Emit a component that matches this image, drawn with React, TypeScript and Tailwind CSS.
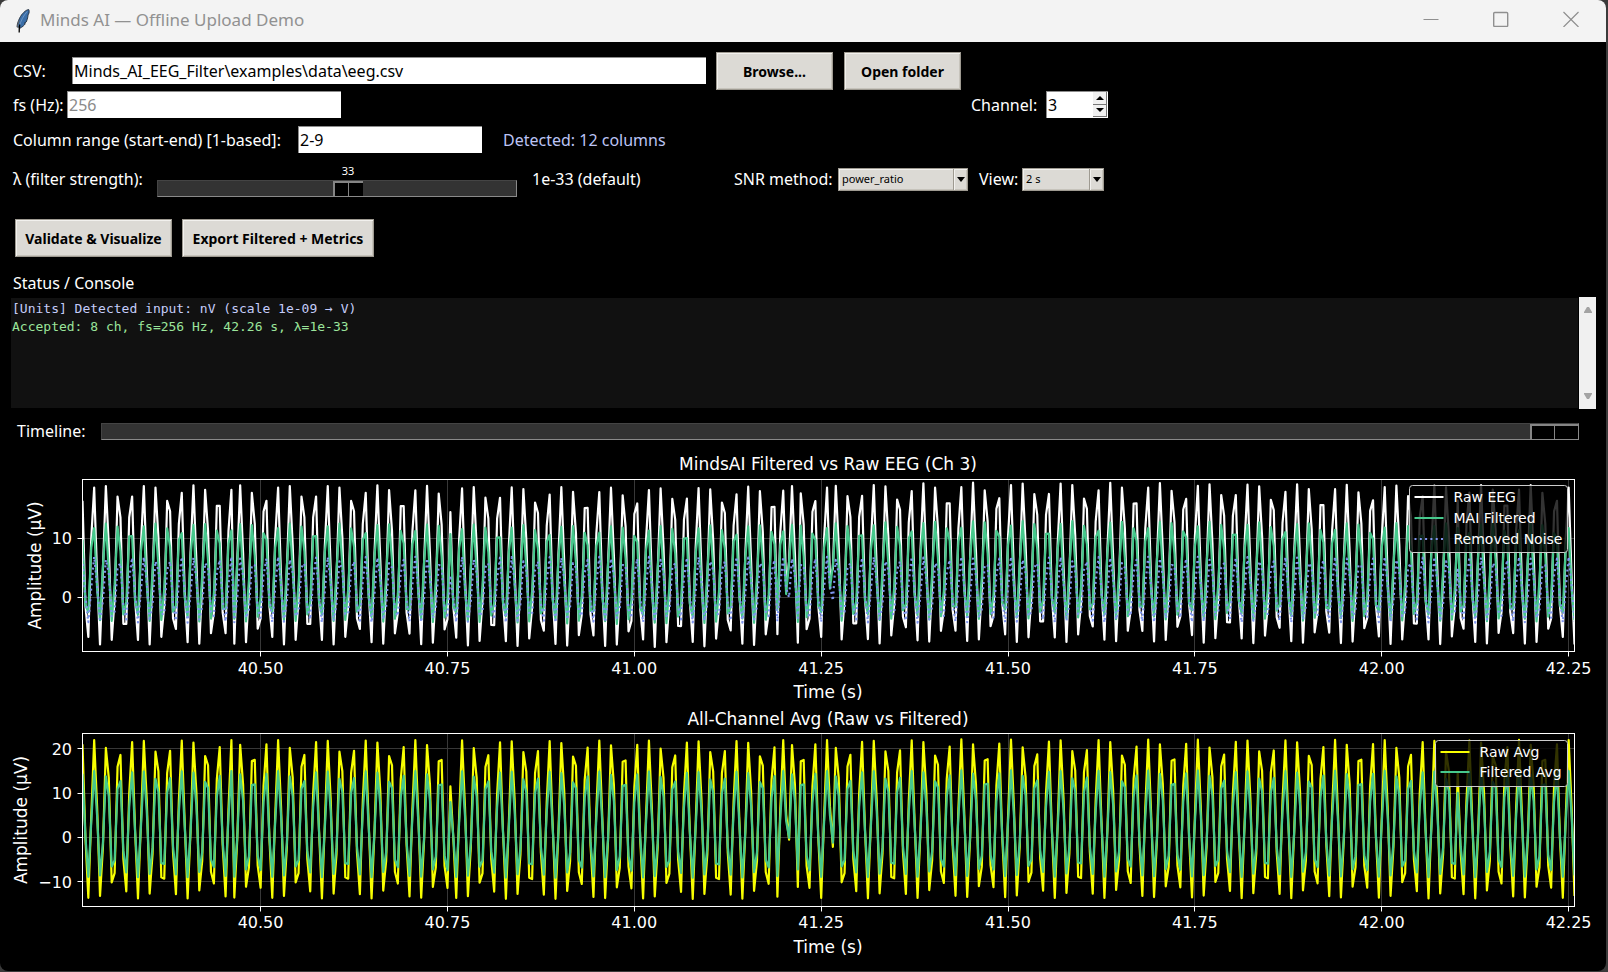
import React, { useState } from "react";

const SAMPLE_RATE = 256;
const SAMPLE_COUNT = 512;
const WINDOW_START = 40.2618;
const WINDOW_END = WINDOW_START + (SAMPLE_COUNT - 1) / SAMPLE_RATE;
const LINE_NOISE_HZ = 60;
const DROPPED_SAMPLES = [52, 127, 238, 242, 246, 257, 472];
const DRIFT: [number, number][] = [
  [0, 0],
  [100, 0],
  [190, -0.45],
  [235, -0.2],
  [300, 0.45],
  [360, 0.4],
  [430, 0.1],
  [511, 0],
];

function driftAt(n: number) {
  for (let i = 1; i < DRIFT.length; i++) {
    const [x0, y0] = DRIFT[i - 1];
    const [x1, y1] = DRIFT[i];
    if (n <= x1) return y0 + ((y1 - y0) * (n - x0)) / (x1 - x0);
  }
  return 0;
}

function makeSignal(mean: number, amplitude: number, phaseDegrees: number, driftScale: number) {
  return Array.from({ length: SAMPLE_COUNT }, (_, n) => {
    const skipped = DROPPED_SAMPLES.filter((d) => n >= d).length;
    const degrees = phaseDegrees + (360 * LINE_NOISE_HZ * (n + skipped)) / SAMPLE_RATE;
    return mean + driftScale * driftAt(n) + amplitude * Math.cos((degrees * Math.PI) / 180);
  });
}

const rawEeg = makeSignal(5.5, 13.5, 36.5, 1);
const filteredEeg = makeSignal(4.2, 8.3, 47.5, 1);
const removedNoise = rawEeg.map((v, i) => v - filteredEeg[i]);
const rawAvg = makeSignal(4.1, 17.9, 19, 0.3);
const filteredAvg = makeSignal(3, 12, 19, 0.3);

type Series = { name: string; color: string; values: number[]; dotted?: boolean };

type ChartProps = {
  title: string;
  series: Series[];
  height: number;
  top: number;
  bottom: number;
  yTicks: number[];
  yZero: number;
  yUnit: number;
  yLabelX: number;
  titleY: number;
  tickLabelY: number;
  timeLabelY: number;
  legend: { x: number; y: number; height: number; step: number };
};

const LEFT = 82.5;
const RIGHT = 1574.5;
const X_TICKS = [40.5, 40.75, 41, 41.25, 41.5, 41.75, 42, 42.25];

function timeToX(t: number) {
  return LEFT + ((RIGHT - LEFT) * (t - WINDOW_START)) / (WINDOW_END - WINDOW_START);
}

function crisp(v: number) {
  return Math.floor(v) + 0.5;
}

function Chart(p: ChartProps) {
  const toY = (v: number) => p.yZero - v * p.yUnit;
  const path = (values: number[]) =>
    values
      .map((v, n) => `${n ? "L" : "M"}${timeToX(WINDOW_START + n / SAMPLE_RATE).toFixed(2)} ${toY(v).toFixed(2)}`)
      .join("");
  const clipId = `plot-${p.top}-${p.height}`;
  return (
    <svg
      viewBox={`0 0 1606 ${p.height}`}
      className="block h-auto w-full font-['DejaVu_Sans',sans-serif]"
      role="img"
      aria-label={p.title}
    >
      <defs>
        <clipPath id={clipId}>
          <rect x={LEFT} y={p.top} width={RIGHT - LEFT} height={p.bottom - p.top} />
        </clipPath>
      </defs>
      <text x={828} y={p.titleY} textAnchor="middle" fontSize={17} fill="#fff">
        {p.title}
      </text>
      <g stroke="#383838" strokeWidth={1}>
        {X_TICKS.map((t) => (
          <line key={t} x1={crisp(timeToX(t))} x2={crisp(timeToX(t))} y1={p.top} y2={p.bottom} />
        ))}
        {p.yTicks.map((v) => (
          <line key={v} x1={LEFT} x2={RIGHT} y1={crisp(toY(v))} y2={crisp(toY(v))} />
        ))}
      </g>
      <g clipPath={`url(#${clipId})`} fill="none" strokeWidth={2.2} strokeLinejoin="round">
        {p.series.map((s) => (
          <path key={s.name} d={path(s.values)} stroke={s.color} strokeDasharray={s.dotted ? "2 3.3" : undefined} />
        ))}
      </g>
      <rect x={LEFT} y={p.top} width={RIGHT - LEFT} height={p.bottom - p.top} fill="none" stroke="#fff" />
      <g stroke="#fff">
        {X_TICKS.map((t) => (
          <line key={t} x1={crisp(timeToX(t))} x2={crisp(timeToX(t))} y1={p.bottom} y2={p.bottom + 5} />
        ))}
        {p.yTicks.map((v) => (
          <line key={v} x1={LEFT - 5} x2={LEFT} y1={crisp(toY(v))} y2={crisp(toY(v))} />
        ))}
      </g>
      <g fill="#fff" fontSize={16}>
        {X_TICKS.map((t) => (
          <text key={t} x={timeToX(t)} y={p.tickLabelY} textAnchor="middle">
            {t.toFixed(2)}
          </text>
        ))}
        {p.yTicks.map((v) => (
          <text key={v} x={72} y={toY(v) + 6} textAnchor="end">
            {String(v).replace("-", "−")}
          </text>
        ))}
      </g>
      <g fill="#fff" fontSize={17} textAnchor="middle">
        <text x={828} y={p.timeLabelY}>
          Time (s)
        </text>
        <text transform={`translate(${p.yLabelX} ${(p.top + p.bottom) / 2}) rotate(-90)`}>Amplitude (µV)</text>
      </g>
      <rect
        x={p.legend.x}
        y={p.legend.y}
        width={1567.5 - p.legend.x}
        height={p.legend.height}
        rx={3}
        fill="#000"
        fillOpacity={0.8}
        stroke="#ccc"
      />
      {p.series.map((s, i) => {
        const y = p.legend.y + 11.5 + i * p.legend.step;
        return (
          <g key={s.name}>
            <line
              x1={p.legend.x + 5}
              x2={p.legend.x + 34}
              y1={y}
              y2={y}
              stroke={s.color}
              strokeWidth={2}
              strokeDasharray={s.dotted ? "2 3.3" : undefined}
            />
            <text x={p.legend.x + 44} y={y + 5} fontSize={14} fill="#fff">
              {s.name}
            </text>
          </g>
        );
      })}
    </svg>
  );
}

function FeatherIcon() {
  return (
    <svg viewBox="0 0 14 24" className="h-6 w-3.5" aria-hidden="true">
      <path
        d="M12.6 .4C9.500 1.200 5.800 4.600 3.600 9.200 2 12.500.8 16 1.200 18.200L2.300 17.600 3.600 19.400C6.300 18 8.500 16.300 9.300 14.600L8.300 14.200 10.300 12.900C11.500 10 12 7.500 12 6L13 4C13.200 2.500 13.200 1 12.600.4Z"
        fill="#3a6ea8"
        stroke="#1f2b3b"
        strokeWidth=".9"
      />
      <path d="M11.200 2.500C7.500 6.500 4.500 12 3.300 18" fill="none" stroke="#7fa3cf" strokeWidth=".7" />
      <path d="M1.200 18 3.200 11.500" stroke="#666" strokeWidth="1" />
      <path d="M3.800 15.500C3.200 18 3.100 20.500 3.200 23.500" fill="none" stroke="#000" strokeWidth="1.300" />
    </svg>
  );
}

function PushButton({ className, children }: { className: string; children: React.ReactNode }) {
  return (
    <button
      type="button"
      className={`h-[38px] border border-[#9e9a91] bg-[#dcdad5] pt-0.5 text-sm font-bold whitespace-nowrap text-black shadow-[inset_1px_1px_#f2f1ee,inset_-1px_-1px_#c6c3bb] ${className}`}
    >
      {children}
    </button>
  );
}

function Combo({ id, options, className }: { id: string; options: string[]; className: string }) {
  return (
    <div className={`relative h-[23px] ${className}`}>
      <select
        id={id}
        className="block size-full appearance-none border border-[#9e9a91] bg-[#dcdad5] pl-[3px] text-[11px] text-black shadow-[inset_1px_1px_#f2f1ee,inset_-1px_-1px_#c6c3bb] outline-none"
      >
        {options.map((o) => (
          <option key={o}>{o}</option>
        ))}
      </select>
      <span className="pointer-events-none absolute inset-y-px right-px flex w-3.5 items-center justify-center border-l border-[#9e9a91] bg-[#dcdad5] shadow-[inset_1px_1px_#f2f1ee,inset_-1px_-1px_#c6c3bb]">
        <svg viewBox="0 0 8 5" className="h-[5px] w-2" aria-hidden="true">
          <path d="M0 0h8L4 5z" fill="#000" />
        </svg>
      </span>
    </div>
  );
}

const FIELD =
  "h-[27px] border border-r-0 border-b-0 border-[#8c8c8c] bg-white px-px text-base text-black outline-none placeholder:text-[#8a8a8a]";

const TRACK =
  "block h-[17px] w-full appearance-none border border-t-[#444] border-r-[#8a8a8a] border-b-[#8a8a8a] border-l-[#444] bg-[#333] outline-none [&::-webkit-slider-thumb]:h-[15px] [&::-webkit-slider-thumb]:appearance-none [&::-webkit-slider-thumb]:border-t-2 [&::-webkit-slider-thumb]:border-l-2 [&::-webkit-slider-thumb]:border-[#858585] [&::-webkit-slider-thumb]:bg-[linear-gradient(90deg,#000_calc(50%-1px),#858585_calc(50%-1px),#858585_50%,#000_50%)]";

export default function App() {
  const [strength, setStrength] = useState(33);
  const minStrength = 1;
  const maxStrength = 61;
  const fraction = (strength - minStrength) / (maxStrength - minStrength);

  return (
    <div className="min-h-screen bg-[#3a3a3a] pr-0.5 pb-px font-['Noto_Sans',sans-serif] text-base text-white">
      <div className="overflow-hidden rounded-lg bg-black">
        <header className="flex h-[42px] items-center bg-[#f3f3f3] pl-4 text-[#919191]">
          <FeatherIcon />
          <h1 className="ml-2.5 flex-1 pb-0.5 text-[17px]">Minds AI — Offline Upload Demo</h1>
          <div className="flex pb-1">
            <button type="button" aria-label="Minimize" className="flex h-8 w-[70px] items-center justify-center">
              <svg viewBox="0 0 16 16" className="size-4" aria-hidden="true">
                <path d="M.5 8.500h15" stroke="#8f8f8f" />
              </svg>
            </button>
            <button type="button" aria-label="Maximize" className="flex h-8 w-[70px] items-center justify-center">
              <svg viewBox="0 0 16 16" className="size-4" aria-hidden="true">
                <rect x=".7" y="1.500" width="14" height="14" rx="1" fill="none" stroke="#8f8f8f" strokeWidth="1.400" />
              </svg>
            </button>
            <button type="button" aria-label="Close" className="flex h-8 w-[70px] items-center justify-center">
              <svg viewBox="0 0 16 16" className="size-4" aria-hidden="true">
                <path d="M.5 1l15 15M15.500 1l-15 15" stroke="#8f8f8f" strokeWidth="1.200" />
              </svg>
            </button>
          </div>
        </header>

        <main>
          <div className="flex items-center pt-2.5 pl-[13px]">
            <label htmlFor="csv" className="mb-px w-[59px] shrink-0">
              CSV:
            </label>
            <input
              id="csv"
              defaultValue="Minds_AI_EEG_Filter\examples\data\eeg.csv"
              className={`${FIELD} mb-px w-[634px]`}
            />
            <PushButton className="ml-2.5 w-[117px]">Browse...</PushButton>
            <PushButton className="ml-[11px] w-[117px]">Open folder</PushButton>
          </div>

          <div className="mt-px flex items-center pl-[13px]">
            <label htmlFor="fs" className="w-[54px] shrink-0 whitespace-nowrap">
              fs (Hz):
            </label>
            <input id="fs" placeholder="256" className={`${FIELD} w-[274px]`} />
            <label htmlFor="channel" className="ml-[630px] w-[75px] shrink-0">
              Channel:
            </label>
            <div className="flex h-[27px] w-[62px] border-t border-l border-[#8c8c8c] bg-white">
              <input id="channel" defaultValue="3" className="w-0 flex-1 px-px text-base text-black outline-none" />
              <div className="mr-px mb-px flex w-3.5 flex-col">
                <button
                  type="button"
                  aria-label="Increase channel"
                  className="flex flex-1 items-center justify-center border-r border-b border-[#777] bg-[#f0f0f0]"
                >
                  <svg viewBox="0 0 8 4" className="h-1 w-2" aria-hidden="true">
                    <path d="M0 4h8L4 0z" fill="#000" />
                  </svg>
                </button>
                <button
                  type="button"
                  aria-label="Decrease channel"
                  className="flex flex-1 items-center justify-center border-r border-b border-[#777] bg-[#f0f0f0]"
                >
                  <svg viewBox="0 0 8 4" className="h-1 w-2" aria-hidden="true">
                    <path d="M0 0h8L4 4z" fill="#000" />
                  </svg>
                </button>
              </div>
            </div>
          </div>

          <div className="mt-2 flex items-center pl-[13px]">
            <label htmlFor="columns" className="w-[285px] shrink-0 whitespace-nowrap">
              Column range (start-end) [1-based]:
            </label>
            <input id="columns" defaultValue="2-9" className={`${FIELD} w-[184px]`} />
            <span className="ml-[21px] text-[#bcc4f5]">Detected: 12 columns</span>
          </div>

          <div className="mt-2.5 flex h-9 items-center pb-1 pl-[13px]">
            <label htmlFor="strength" className="w-36 shrink-0 whitespace-nowrap">
              λ (filter strength):
            </label>
            <div className="relative -mb-0.5 w-[360px] self-end">
              <output
                htmlFor="strength"
                className="absolute bottom-[18px] -translate-x-1/2 text-[11px] leading-4"
                style={{ left: `calc(16px + (100% - 32px) * ${fraction})` }}
              >
                {strength}
              </output>
              <input
                id="strength"
                type="range"
                min={minStrength}
                max={maxStrength}
                value={strength}
                onChange={(e) => setStrength(Number(e.target.value))}
                className={`${TRACK} [&::-webkit-slider-thumb]:w-[30px]`}
              />
            </div>
            <span className="ml-[15px] w-[202px]">1e-{strength} (default)</span>
            <label htmlFor="snr" className="w-[104px] shrink-0 whitespace-nowrap">
              SNR method:
            </label>
            <Combo id="snr" options={["power_ratio"]} className="w-[130px]" />
            <label htmlFor="view" className="ml-[11px] w-[43px] shrink-0">
              View:
            </label>
            <Combo id="view" options={["2 s", "5 s", "10 s"]} className="w-[82px]" />
          </div>

          <div className="mt-5 flex gap-2.5 pl-[15px]">
            <PushButton className="w-[157px]">Validate &amp; Visualize</PushButton>
            <PushButton className="w-48">Export Filtered + Metrics</PushButton>
          </div>

          <h2 className="mt-3.5 pl-[13px] leading-6">Status / Console</h2>
          <div className="mt-0.5 flex gap-px pr-2.5 pl-[11px]">
            <div
              role="log"
              className="my-px h-[110px] flex-1 bg-[#111] px-px pt-0.5 font-['DejaVu_Sans_Mono',monospace] text-[13px] leading-[18px]"
            >
              <p className="text-[#c5cdfa]">[Units] Detected input: nV (scale 1e-09 → V)</p>
              <p className="text-[#9be59b]">Accepted: 8 ch, fs=256 Hz, 42.26 s, λ=1e-33</p>
            </div>
            <div className="flex w-[17px] flex-col items-center justify-between bg-[#f0f0f0] py-2.5">
              <svg viewBox="0 0 8 6" className="h-1.5 w-2" aria-hidden="true">
                <path d="M0 6V5L3 0h2l3 5v1z" fill="#a3a3a3" />
              </svg>
              <svg viewBox="0 0 8 6" className="h-1.5 w-2" aria-hidden="true">
                <path d="M0 0v1l3 5h2l3-5V0z" fill="#a3a3a3" />
              </svg>
            </div>
          </div>

          <div className="mt-[11px] flex h-[22px] items-center pr-[27px] pl-[17px]">
            <label htmlFor="timeline" className="w-[84px] shrink-0">
              Timeline:
            </label>
            <input
              id="timeline"
              type="range"
              min={0}
              max={40}
              defaultValue={40}
              className={`${TRACK} [&::-webkit-slider-thumb]:w-12`}
            />
          </div>

          <div className="mt-2">
            <Chart
              title="MindsAI Filtered vs Raw EEG (Ch 3)"
              series={[
                { name: "Raw EEG", color: "#ffffff", values: rawEeg },
                { name: "MAI Filtered", color: "#46c88c", values: filteredEeg },
                { name: "Removed Noise", color: "#7f95ee", values: removedNoise, dotted: true },
              ]}
              height={260}
              top={29.5}
              bottom={201.5}
              yTicks={[10, 0]}
              yZero={147.3}
              yUnit={5.9}
              yLabelX={41}
              titleY={20}
              tickLabelY={224}
              timeLabelY={248}
              legend={{ x: 1409.5, y: 35.5, height: 67, step: 21 }}
            />
            <Chart
              title="All-Channel Avg (Raw vs Filtered)"
              series={[
                { name: "Raw Avg", color: "#f8ff00", values: rawAvg },
                { name: "Filtered Avg", color: "#46c88c", values: filteredAvg },
              ]}
              height={261}
              top={23.5}
              bottom={196.5}
              yTicks={[20, 10, 0, -10]}
              yZero={127.4}
              yUnit={4.43}
              yLabelX={27}
              titleY={15}
              tickLabelY={218}
              timeLabelY={243}
              legend={{ x: 1435.5, y: 30.5, height: 46, step: 20 }}
            />
          </div>
        </main>
      </div>
    </div>
  );
}
